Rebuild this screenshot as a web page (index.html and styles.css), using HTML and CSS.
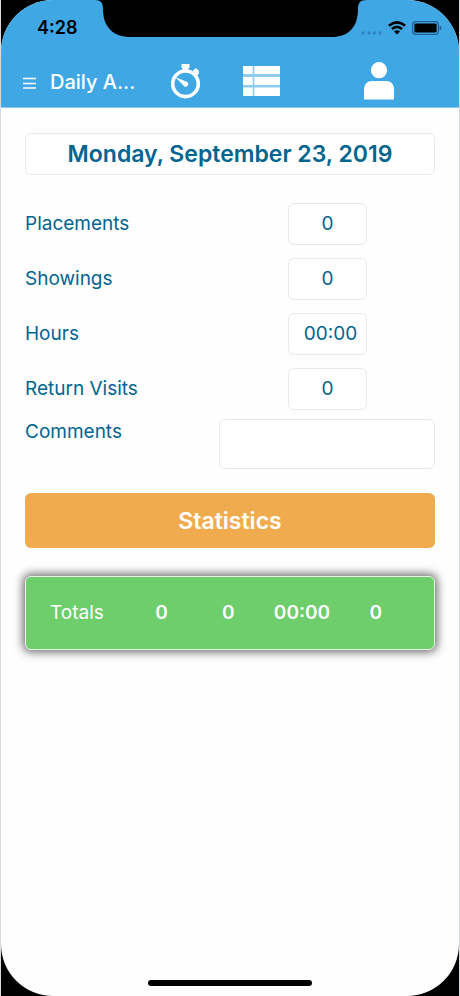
FILE: index.html
```html
<!DOCTYPE html>
<html lang="en">
<head>
<meta charset="utf-8">
<meta name="viewport" content="width=device-width, initial-scale=1">
<title>Daily Activity</title>
<link rel="stylesheet" href="styles.css">
</head>
<body>
<div class="device">
  <div class="screen">
    <header class="top">
      <div class="status">
        <span class="clock">4:28</span>
        <svg class="notch" width="272" height="37" viewBox="0 0 272 37" aria-hidden="true"><path d="M0 0C6 0 8 3 8 9C8 27 18 37 36 37H236C254 37 263 27 263 9C263 3 265 0 272 0Z"/></svg>
        <div class="signals">
          <svg width="22" height="14" viewBox="0 0 22 14" fill="#2f86c2" aria-hidden="true"><circle cx="3" cy="12" r="1.8"/><circle cx="9" cy="12" r="1.8"/><circle cx="14.5" cy="12" r="1.8"/><circle cx="20" cy="12" r="1.8"/></svg>
          <svg width="18" height="14" viewBox="0 0 18 14" aria-hidden="true"><g fill="none" stroke="#000" stroke-width="2.6"><path d="M.9 4.8Q9-2.2 17.1 4.8"/><path d="M3.9 8Q9 3.6 14.1 8"/></g><path d="M9 13.5L6 10.5Q9 8.2 12 10.5Z"/></svg>
          <svg width="30" height="14" viewBox="0 0 30 14" aria-hidden="true"><rect x=".6" y=".6" width="25.8" height="12.8" rx="3.2" fill="none" stroke="#205f91" stroke-width="1.2"/><rect x="2.4" y="2.4" width="22.2" height="9.2" rx="1.4"/><path d="M27.6 4.6Q29.6 5.2 29.6 7T27.6 9.4Z" fill="#205f91"/></svg>
        </div>
      </div>
      <nav class="nav">
        <button class="nav-button" type="button" aria-label="Menu"><svg width="13" height="14" viewBox="0 0 13 14" fill="none" stroke="#fff" stroke-width="1.7"><path d="M0 3.5H13M0 8.5H13M0 13H13"/></svg></button>
        <h1 class="title">Daily A...</h1>
        <button class="nav-button timer" type="button" aria-label="Timer"><svg width="32" height="36" viewBox="0 0 32 36"><circle cx="15.5" cy="19.8" r="12.8" fill="none" stroke="#fff" stroke-width="3.6"/><path d="M11.5 0H19.5V4H18.4V8H12.6V4H11.5Z" fill="#fff"/><path d="M22 8.5L24.2 5.2L26 4.2L28.8 6.5V9.5L26.5 12Z" fill="#fff"/><path d="M5.4 13.2L16.8 17.7A2.6 2.6 0 1 1 13.5 21.4Z" fill="#fff"/></svg></button>
        <button class="nav-button list" type="button" aria-label="List"><svg width="38" height="32" viewBox="0 0 38 32"><path d="M0 0H37V30H0Z" fill="#8fcaf0"/><path d="M0 0H9.700V8H0ZM11.300 0H37V8H11.300ZM0 11H9.700V19H0ZM11.300 11H37V19H11.300ZM0 21.500H9.700V30H0ZM11.300 21.500H37V30H11.300Z" fill="#fff"/></svg></button>
        <button class="nav-button person" type="button" aria-label="Profile"><svg width="32" height="40" viewBox="0 0 32 40" fill="#fff"><circle cx="16" cy="8.2" r="8.1"/><path d="M1 37.5V28C1 22 4.5 19 9 19H23C28 19 31 22 31 28V37.5Z"/></svg></button>
      </nav>
    </header>
    <main class="content">
      <button class="date" type="button">Monday, September 23, 2019</button>
      <form class="form">
        <div class="row"><label for="placements">Placements</label><input class="field" id="placements" type="text" inputmode="numeric" value="0"></div>
        <div class="row"><label for="showings">Showings</label><input class="field" id="showings" type="text" inputmode="numeric" value="0"></div>
        <div class="row"><label for="hours">Hours</label><input class="field field-time" id="hours" type="text" value="00:00"></div>
        <div class="row"><label for="visits">Return Visits</label><input class="field" id="visits" type="text" inputmode="numeric" value="0"></div>
        <div class="comments"><label for="comments">Comments</label><textarea class="box" id="comments"></textarea></div>
      </form>
      <button class="statistics" type="button">Statistics</button>
      <div class="totals">
        <table>
          <colgroup><col class="c-label"><col class="c-placements"><col class="c-showings"><col class="c-hours"><col class="c-visits"></colgroup>
          <tbody><tr><th scope="row">Totals</th><td>0</td><td>0</td><td>00:00</td><td>0</td></tr></tbody>
        </table>
      </div>
    </main>
    <div class="home-bar"></div>
  </div>
</div>
</body>
</html>
```
FILE: styles.css
```css
* { box-sizing: border-box; }

body {
  margin: 0;
  background: #d8dcdf;
  color: #00658f;
  font-family: Inter, "Liberation Sans", sans-serif;
  font-size: 19px;
  line-height: 24px;
}

button, input, textarea { font: inherit; color: inherit; }

.device {
  min-height: 100vh;
  margin: 0 1px;
  background: #000;
  display: flex;
}

.screen {
  flex: 1;
  min-width: 0;
  display: flex;
  flex-direction: column;
  background: #fefefe;
  border-radius: 52px;
  overflow: hidden;
}

.top {
  background: #40a7e5;
  border-bottom: 1px solid #8ec5e8;
}

.status {
  position: relative;
  height: 56px;
  padding: 0 17px 0 36px;
  display: flex;
  justify-content: space-between;
  align-items: center;
}

.clock { color: #000; font-size: 18px; font-weight: 600; }

.notch { position: absolute; top: 0; left: 50%; margin-left: -135px; }

.signals { display: flex; gap: 6px; align-items: center; }

.nav {
  height: 51px;
  padding: 0 22px;
  display: flex;
  align-items: center;
}

.nav-button {
  border: 0;
  padding: 0;
  background: none;
  display: flex;
  cursor: pointer;
}

.title {
  margin: 0 0 0 14px;
  width: 20%;
  white-space: nowrap;
  color: #fff;
  font-size: 20px;
  font-weight: 500;
}

.timer { margin-left: 9%; }
.list { margin-left: 10%; }
.person { margin-left: auto; margin-right: 42px; }

.content {
  flex: 1;
  padding: 25px 24px;
  display: flex;
  flex-direction: column;
}

.date, .field, .box {
  border: 1px solid #e9e9e9;
  border-radius: 6px;
  background: #fff;
}

.date {
  height: 42px;
  padding: 0;
  font-size: 23px;
  font-weight: 600;
}

.form { margin-top: 28px; }

.row {
  display: grid;
  grid-template-columns: 1fr 79px;
  align-items: center;
  margin-bottom: 13px;
  padding-right: 68px;
}

.field {
  width: 100%;
  height: 42px;
  padding: 0 0 2px;
  text-align: center;
}

.field-time { padding-left: 6px; }

.comments {
  display: flex;
  justify-content: space-between;
  margin-top: -4px;
}

.comments label { padding-top: 1px; }

.box {
  width: 216px;
  height: 50px;
  resize: none;
}

.statistics {
  height: 55px;
  margin-top: 24px;
  border: 0;
  border-radius: 6px;
  background: #f1ab4f;
  color: #fff;
  font-size: 23px;
  font-weight: 600;
}

.totals {
  height: 74px;
  margin-top: 28px;
  padding: 0 24px;
  display: flex;
  align-items: center;
  border: 1px solid #e6f3e6;
  border-radius: 6px;
  background: #6dce6b;
  box-shadow: 0 0 10px 2px #666;
  color: #fff;
}

.totals table {
  width: 100%;
  table-layout: fixed;
  border-collapse: collapse;
}

.totals th, .totals td { padding: 0; }
.totals th { font-weight: 400; text-align: left; }
.totals td { font-weight: 600; text-align: center; }

.c-label { width: 22%; }
.c-placements { width: 18%; }
.c-showings { width: 19%; }
.c-hours { width: 22%; }
.c-visits { width: 19%; }

.home-bar {
  width: 36%;
  height: 6px;
  margin: 0 auto 10px;
  border-radius: 3px;
  background: #000;
}
```
